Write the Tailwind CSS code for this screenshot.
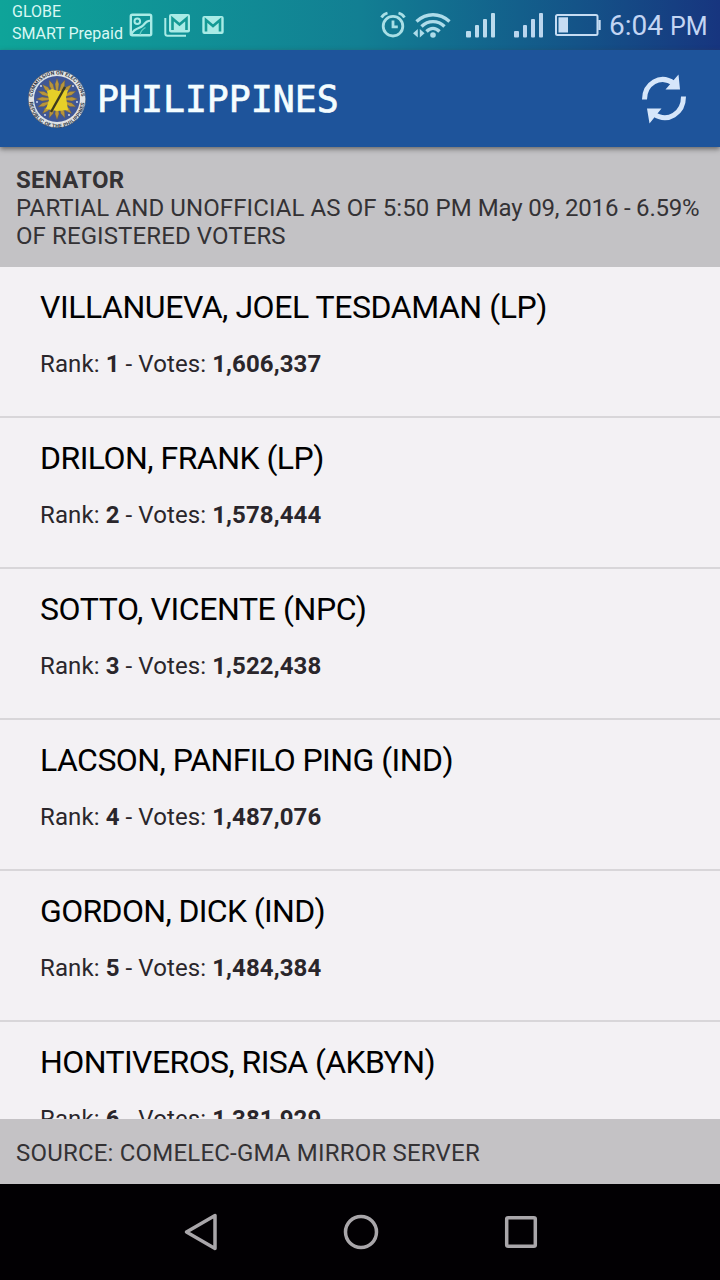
<!doctype html>
<html lang="en">

<head>
    <meta charset="UTF-8">
    <meta name="viewport" content="width=device-width, initial-scale=1.0">
    <script src="https://cdn.jsdelivr.net/npm/@tailwindcss/browser@4"></script>
    <title>Philippines - Senator</title>
</head>

<body class="bg-black">
    <div class="flex h-[1280px] w-[720px] flex-col overflow-hidden font-['Roboto',sans-serif]">
        <!-- status bar -->
        <div class="flex h-[50px] shrink-0 bg-linear-to-r from-[#0fa499] via-[#127f93] via-50% to-[#17357f] pl-3 text-[#cdf3f0]">
            <div class="w-[117px] pt-[1px] text-base/[22px] whitespace-nowrap text-[#d8f8f4]">
                <p>GLOBE</p>
                <p>SMART Prepaid</p>
            </div>
            <svg class="mt-[13px] h-6 w-6" viewBox="0 0 24 24" fill="none" stroke="#a9ebe6" stroke-width="2.4">
                <rect x="1.8" y="1.8" width="20.4" height="20.4" rx="1.5" />
                <circle cx="8.3" cy="8.3" r="2.8" stroke-width="2" />
                <path d="M2.500 21C6 14 11 16 14 12.500S17.500 8 22 7.500" stroke-width="2.200" />
                <path d="M11 21.500Q12 17 16.500 14.500" stroke-width="1.400" stroke="#5fcdc4" />
            </svg>
            <svg class="mt-[13px] ml-[11px] h-6 w-[27px]" viewBox="0 0 27 24" fill="none">
                <path d="M1.300 5V20.500Q1.300 22.700 3.500 22.700H22" stroke="#a9ebe6" stroke-width="2" />
                <rect x="5" y="1" width="21" height="18.500" rx="2" fill="#a9ebe6" />
                <path d="M8.500 17V5.500L15.500 11.500L22.500 5.500V17" stroke="#149a95" stroke-width="2.600" />
            </svg>
            <svg class="mt-[15px] ml-[11px] h-5 w-[22px]" viewBox="0 0 22 20" fill="none">
                <rect x="0.300" y="1" width="21.400" height="18" rx="2" fill="#a9ebe6" />
                <path d="M4 16.500V5L11 11L18 5V16.500" stroke="#149a95" stroke-width="2.600" />
            </svg>
            <div class="ml-auto flex pr-3 text-[#c6e0f3]">
                <svg class="mt-[11px] h-[27px] w-[26px]" viewBox="0 0 26 27" fill="none" stroke="#a9dfe6" stroke-width="2.800">
                    <circle cx="13" cy="15.200" r="9.800" />
                    <path d="M13 9.500V15.800H17.800" />
                    <path d="M1.500 6.500Q3.500 3 7.500 2M24.500 6.500Q22.500 3 18.500 2" />
                </svg>
                <svg class="mt-[12px] ml-[7px] h-[27px] w-[38px]" viewBox="0 0 38 27" fill="none" stroke="#aedcea" stroke-width="3.400">
                    <path d="M3.500 9.500Q11 2.800 20 2.800T36.500 9.500" />
                    <path d="M8.500 14.500Q13.500 9.600 20 9.600T31.500 14.500" />
                    <path d="M13.500 19.500Q16.500 16.400 20 16.400T26.500 19.500" />
                    <circle cx="20" cy="23" r="2.800" fill="#aedcea" stroke="none" />
                    <path d="M4.800 17V25.500L0 21.200ZM6.800 17V25.500L11.600 21.200Z" fill="#aedcea" stroke="none" />
                </svg>
                <svg class="mt-[12px] ml-[15px] h-[26px] w-[30px]" viewBox="0 0 30 26" fill="#bbdbed">
                    <rect y="19" width="5" height="6.500" rx="1" />
                    <rect x="9" y="13" width="4" height="12.500" rx="1" />
                    <rect x="17" y="7" width="4" height="18.500" rx="1" />
                    <rect x="25" y="1" width="4" height="24.500" rx="1" />
                </svg>
                <svg class="mt-[12px] ml-[18px] h-[26px] w-[30px]" viewBox="0 0 30 26" fill="#bbd6ee">
                    <rect y="19" width="5" height="6.500" rx="1" />
                    <rect x="9" y="13" width="4" height="12.500" rx="1" />
                    <rect x="17" y="7" width="4" height="18.500" rx="1" />
                    <rect x="25" y="1" width="4" height="24.500" rx="1" />
                </svg>
                <svg class="mt-[13px] ml-[11px] h-6 w-[46px]" viewBox="0 0 46 24" fill="none" stroke="#c6dcf3" stroke-width="2">
                    <rect x="1" y="2" width="41.500" height="20" rx="1.500" />
                    <path d="M44.500 7V17" stroke-width="2.400" />
                    <rect x="3.500" y="4.300" width="9.500" height="15.200" fill="#c6dcf3" stroke="none" />
                </svg>
                <p class="ml-2 w-[99px] pt-[10px] text-[28px]/8 whitespace-nowrap text-[#c3d5f3]">6:04 <span class="text-[25px]/8">PM</span></p>
            </div>
        </div>

        <!-- title bar -->
        <header class="z-10 flex h-[97px] shrink-0 items-center bg-[#1e549b] pr-[33px] pl-[27px] shadow-[0_2px_5px_rgba(60,60,60,0.7)]">
            <svg class="h-[60px] w-[60px]" viewBox="0 0 60 60">
                <defs>
                    <path id="arcTop" d="M5.500 30A24.500 24.500 0 0 1 54.500 30" />
                    <path id="arcBottom" d="M2.300 31A27.700 27.700 0 0 0 57.700 31" />
                    <path id="ray" d="M30 30L28 15L30 9.500L32 15Z" />
                </defs>
                <circle cx="30" cy="30" r="28.800" fill="#dfe2e4" stroke="#394b68" stroke-width="0.600" />
                <circle cx="30" cy="30" r="23" fill="#3f5796" />
                <g fill="#b9953a" stroke="#6a5c44" stroke-width="0.400">
                    <use href="#ray" />
                    <use href="#ray" transform="rotate(22.500 30 30)" />
                    <use href="#ray" transform="rotate(45 30 30)" />
                    <use href="#ray" transform="rotate(67.500 30 30)" />
                    <use href="#ray" transform="rotate(90 30 30)" />
                    <use href="#ray" transform="rotate(112.500 30 30)" />
                    <use href="#ray" transform="rotate(135 30 30)" />
                    <use href="#ray" transform="rotate(157.500 30 30)" />
                    <use href="#ray" transform="rotate(180 30 30)" />
                    <use href="#ray" transform="rotate(202.500 30 30)" />
                    <use href="#ray" transform="rotate(225 30 30)" />
                    <use href="#ray" transform="rotate(247.500 30 30)" />
                    <use href="#ray" transform="rotate(270 30 30)" />
                    <use href="#ray" transform="rotate(292.500 30 30)" />
                    <use href="#ray" transform="rotate(315 30 30)" />
                    <use href="#ray" transform="rotate(337.500 30 30)" />
                </g>
                <path d="M20 22L25 20L31 22L41 21L39 28L41 41L30 42L19 40L22 31Z" fill="#e6d028" />
                <path d="M38 18L24 43" stroke="#3c3a1e" stroke-width="2.400" />
                <g fill="#dfe6f5">
                    <circle cx="14" cy="17" r="0.900" />
                    <circle cx="46" cy="17" r="0.900" />
                    <circle cx="10" cy="33" r="0.900" />
                    <circle cx="50" cy="33" r="0.900" />
                    <circle cx="18" cy="46" r="0.900" />
                    <circle cx="42" cy="46" r="0.900" />
                </g>
                <g class="font-['Roboto',sans-serif] font-bold" font-size="5.200" fill="#333b48">
                    <text><textPath href="#arcTop" textLength="72" startOffset="2">COMMISSION ON ELECTIONS</textPath></text>
                    <text><textPath href="#arcBottom" textLength="82" startOffset="2">REPUBLIC OF THE PHILIPPINES</textPath></text>
                </g>
            </svg>
            <h1 class="ml-[10px] pt-[3px] font-['DejaVu_Sans_Mono',monospace] text-[36.500px] leading-none text-[#f4fdff] [-webkit-text-stroke:0.7px_#f4fdff]">PHILIPPINES</h1>
            <svg class="ml-auto h-[50px] w-[46px]" viewBox="0 0 46 50">
                <g fill="none" stroke="#d6e6fa" stroke-width="5">
                    <path d="M3.500 25.500C3.500 10 19 -0.500 33 9.500" />
                    <path d="M42.500 22.500C42.500 39 27 50 12 39.500" />
                </g>
                <path d="M37.500 0.500L39 15.500L24.500 15.500ZM8.500 49.500L6 34.500L20.500 34.500Z" fill="#d6e6fa" />
            </svg>
        </header>

        <!-- contest info -->
        <section class="h-[120px] shrink-0 bg-[#c3c2c5] px-4 pt-[19px] text-2xl/7 text-[#343235]">
            <h2 class="font-bold tracking-[0.25px]">SENATOR</h2>
            <p class="tracking-[0.1px] whitespace-nowrap">PARTIAL AND UNOFFICIAL AS OF 5:50 PM <span class="tracking-[-0.2px]">May 09, 2016 - 6.59%</span><br>OF REGISTERED VOTERS</p>
        </section>

        <!-- candidates -->
        <ul class="min-h-0 flex-1 overflow-hidden bg-[#f3f1f4] text-2xl/7 tracking-[0.1px] whitespace-nowrap text-[#2a262b]">
            <li class="h-[151px] border-b-2 border-[#d8d6d9] pt-[22px] pl-10">
                <h3 class="text-[32px]/9 tracking-[-0.45px] text-black">VILLANUEVA, JOEL TESDAMAN (LP)</h3>
                <p class="mt-[25px]">Rank: <b>1</b> - Votes: <b>1,606,337</b></p>
            </li>
            <li class="h-[151px] border-b-2 border-[#d8d6d9] pt-[22px] pl-10">
                <h3 class="text-[32px]/9 tracking-[-0.53px] text-black">DRILON, FRANK (LP)</h3>
                <p class="mt-[25px]">Rank: <b>2</b> - Votes: <b>1,578,444</b></p>
            </li>
            <li class="h-[151px] border-b-2 border-[#d8d6d9] pt-[22px] pl-10">
                <h3 class="text-[32px]/9 tracking-[-0.4px] text-black">SOTTO, VICENTE (NPC)</h3>
                <p class="mt-[25px]">Rank: <b>3</b> - Votes: <b>1,522,438</b></p>
            </li>
            <li class="h-[151px] border-b-2 border-[#d8d6d9] pt-[22px] pl-10">
                <h3 class="text-[32px]/9 tracking-[-0.56px] text-black">LACSON, PANFILO PING (IND)</h3>
                <p class="mt-[25px]">Rank: <b>4</b> - Votes: <b>1,487,076</b></p>
            </li>
            <li class="h-[151px] border-b-2 border-[#d8d6d9] pt-[22px] pl-10">
                <h3 class="text-[32px]/9 tracking-[-0.65px] text-black">GORDON, DICK (IND)</h3>
                <p class="mt-[25px]">Rank: <b>5</b> - Votes: <b>1,484,384</b></p>
            </li>
            <li class="h-[151px] border-b-2 border-[#d8d6d9] pt-[22px] pl-10">
                <h3 class="text-[32px]/9 tracking-[-0.58px] text-black">HONTIVEROS, RISA (AKBYN)</h3>
                <p class="mt-[25px]">Rank: <b>6</b> - Votes: <b>1,381,929</b></p>
            </li>
        </ul>

        <footer class="h-[65px] shrink-0 bg-[#c4c2c5] px-4 pt-5 text-2xl/7 tracking-[0.2px] text-[#343235]">SOURCE: COMELEC-GMA MIRROR SERVER</footer>

        <!-- navigation bar -->
        <nav class="flex h-24 shrink-0 items-center bg-[#020003] pl-[184px]">
            <svg class="h-10 w-[34px]" viewBox="0 0 34 40" fill="none" stroke="#a9a6aa" stroke-width="3.500" stroke-linejoin="round">
                <path d="M31 3.500V36.500L2.500 20Z" />
            </svg>
            <svg class="ml-[125px] h-9 w-9" viewBox="0 0 36 36" fill="none" stroke="#a9a6aa" stroke-width="3.500">
                <circle cx="18" cy="18" r="15.500" />
            </svg>
            <svg class="ml-[125px] h-[34px] w-[34px]" viewBox="0 0 34 34" fill="none" stroke="#a9a6aa" stroke-width="3.500">
                <rect x="2.700" y="2.700" width="28.600" height="28.600" rx="1.500" />
            </svg>
        </nav>
    </div>
</body>

</html>
